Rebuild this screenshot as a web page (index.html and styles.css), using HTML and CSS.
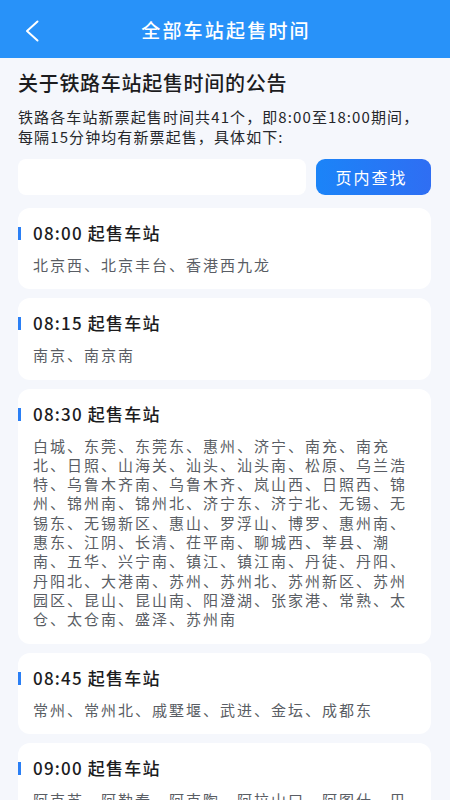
FILE: index.html
```html
<!DOCTYPE html>
<html lang="zh-CN">
<head>
    <meta charset="UTF-8">
    <meta name="viewport" content="width=device-width, initial-scale=1.0">
    <title>全部车站起售时间</title>
    <link rel="stylesheet" href="styles.css">
</head>
<body>

<div class="header">
    <a class="back" href="#">
        <svg width="14" height="22" viewBox="0 0 14 22">
            <polyline points="12.5,1.5 2,11 12.5,20.5" fill="none" stroke="#fff" stroke-width="2" stroke-linecap="round" stroke-linejoin="round"/>
        </svg>
    </a>
    <h1>全部车站起售时间</h1>
</div>

<div class="container">
    <h2>关于铁路车站起售时间的公告</h2>
    <p class="notice">铁路各车站新票起售时间共41个，即8:00至18:00期间，<br>每隔15分钟均有新票起售，具体如下:</p>

    <div class="search">
        <input type="text" id="keyword">
        <button>页内查找</button>
    </div>

    <div class="card">
        <h3>08:00 起售车站</h3>
        <p>北京西、北京丰台、香港西九龙</p>
    </div>

    <div class="card">
        <h3>08:15 起售车站</h3>
        <p>南京、南京南</p>
    </div>

    <div class="card">
        <h3>08:30 起售车站</h3>
        <p>白城、东莞、东莞东、惠州、济宁、南充、南充北、日照、山海关、汕头、汕头南、松原、乌兰浩特、乌鲁木齐南、乌鲁木齐、岚山西、日照西、锦州、锦州南、锦州北、济宁东、济宁北、无锡、无锡东、无锡新区、惠山、罗浮山、博罗、惠州南、惠东、江阴、长清、茌平南、聊城西、莘县、潮南、五华、兴宁南、镇江、镇江南、丹徒、丹阳、丹阳北、大港南、苏州、苏州北、苏州新区、苏州园区、昆山、昆山南、阳澄湖、张家港、常熟、太仓、太仓南、盛泽、苏州南</p>
    </div>

    <div class="card">
        <h3>08:45 起售车站</h3>
        <p>常州、常州北、戚墅堰、武进、金坛、成都东</p>
    </div>

    <div class="card">
        <h3>09:00 起售车站</h3>
        <p>阿克苏、阿勒泰、阿克陶、阿拉山口、阿图什、巴楚、巴州、博乐、昌吉、哈密、和田、喀什、库车、库尔勒、奎屯</p>
    </div>
</div>

</body>
</html>
```

FILE: styles.css
```css
body {
    font-family: "Noto Sans CJK SC", "Noto Sans", sans-serif;
    background-color: #f5f7fc;
    margin: 0;
    padding: 0;
    color: #1c1c1e;
}

.header {
    position: relative;
    height: 58px;
    background-color: #2892f9;
    display: flex;
    align-items: center;
    justify-content: center;
}

.header h1 {
    margin: 0;
    font-size: 19px;
    font-weight: 500;
    letter-spacing: 2.2px;
    color: #fff;
    padding-left: 2px;
}

.back {
    position: absolute;
    left: 25px;
    top: 20px;
    display: block;
    line-height: 0;
}

.container {
    padding: 11px 19px 0 18px;
}

h2 {
    margin: 0;
    font-size: 20px;
    font-weight: 500;
    line-height: 28px;
    letter-spacing: 0.7px;
}

.notice {
    margin: 10px 0 0;
    font-size: 15px;
    line-height: 19.5px;
    letter-spacing: 1.1px;
    color: #26272b;
}

.search {
    display: flex;
    gap: 10px;
    margin-top: 13px;
    margin-bottom: 13px;
}

.search input {
    flex: 1;
    height: 36px;
    border: none;
    border-radius: 8px;
    background-color: #fff;
    padding: 0 10px;
    outline: none;
}

.search button {
    width: 115px;
    height: 36px;
    border: none;
    border-radius: 9px;
    background: linear-gradient(90deg, #1b84f8, #2f6ef3);
    color: #fff;
    font-family: inherit;
    font-size: 16px;
    letter-spacing: 2px;
    padding-left: 2px;
    cursor: pointer;
}

.card {
    position: relative;
    background-color: #fff;
    border-radius: 12px;
    padding: 13px 15px 15px;
    margin-bottom: 9px;
}

.card h3 {
    margin: 0;
    font-size: 17px;
    font-weight: 500;
    line-height: 24px;
    letter-spacing: 1.2px;
}

.card h3::before {
    content: "";
    position: absolute;
    left: 0;
    top: 19px;
    width: 3px;
    height: 13px;
    background-color: #2a7ff5;
}

.card p {
    margin: 10px 0 0;
    font-size: 15px;
    line-height: 19.3px;
    letter-spacing: 2px;
    color: #595d64;
}
```
